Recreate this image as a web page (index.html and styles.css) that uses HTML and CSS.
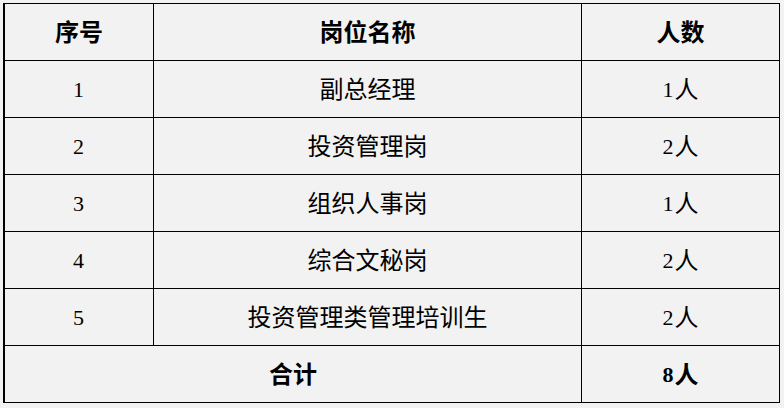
FILE: index.html
```html
<!DOCTYPE html>
<html lang="zh-CN">
<head>
<meta charset="utf-8">
<title>岗位表</title>
<link rel="stylesheet" href="styles.css">
</head>
<body>
<div class="table">
  <div class="cell head">序号</div>
  <div class="cell head">岗位名称</div>
  <div class="cell head">人数</div>

  <div class="cell"><span class="num">1</span></div>
  <div class="cell">副总经理</div>
  <div class="cell"><span class="num">1</span>人</div>

  <div class="cell"><span class="num">2</span></div>
  <div class="cell">投资管理岗</div>
  <div class="cell"><span class="num">2</span>人</div>

  <div class="cell"><span class="num">3</span></div>
  <div class="cell">组织人事岗</div>
  <div class="cell"><span class="num">1</span>人</div>

  <div class="cell"><span class="num">4</span></div>
  <div class="cell">综合文秘岗</div>
  <div class="cell"><span class="num">2</span>人</div>

  <div class="cell"><span class="num">5</span></div>
  <div class="cell">投资管理类管理培训生</div>
  <div class="cell"><span class="num">2</span>人</div>

  <div class="cell head span2">合计</div>
  <div class="cell head"><span class="num">8</span>人</div>
</div>
</body>
</html>
```

FILE: styles.css
```css
html, body {
  margin: 0;
  padding: 0;
  background: #f2f2f2;
}
body {
  padding: 3px 0 0 3px;
  font-family: "Liberation Serif", "Noto Sans CJK SC", serif;
  font-size: 24px;
  color: #000;
}
.table {
  display: grid;
  grid-template-columns: 149px 428px 198px;
  grid-auto-rows: 57px;
  width: max-content;
  border-left: 2px solid #000;
  border-top: 1px solid #000;
}
.cell {
  box-sizing: border-box;
  border-right: 1px solid #000;
  border-bottom: 1px solid #000;
  display: flex;
  align-items: center;
  justify-content: center;
  line-height: 1;
  padding-top: 1px;
}
.head {
  font-weight: bold;
}
.span2 {
  grid-column: span 2;
}
.num {
  font-size: 22px;
  margin-right: 1px;
}
```
